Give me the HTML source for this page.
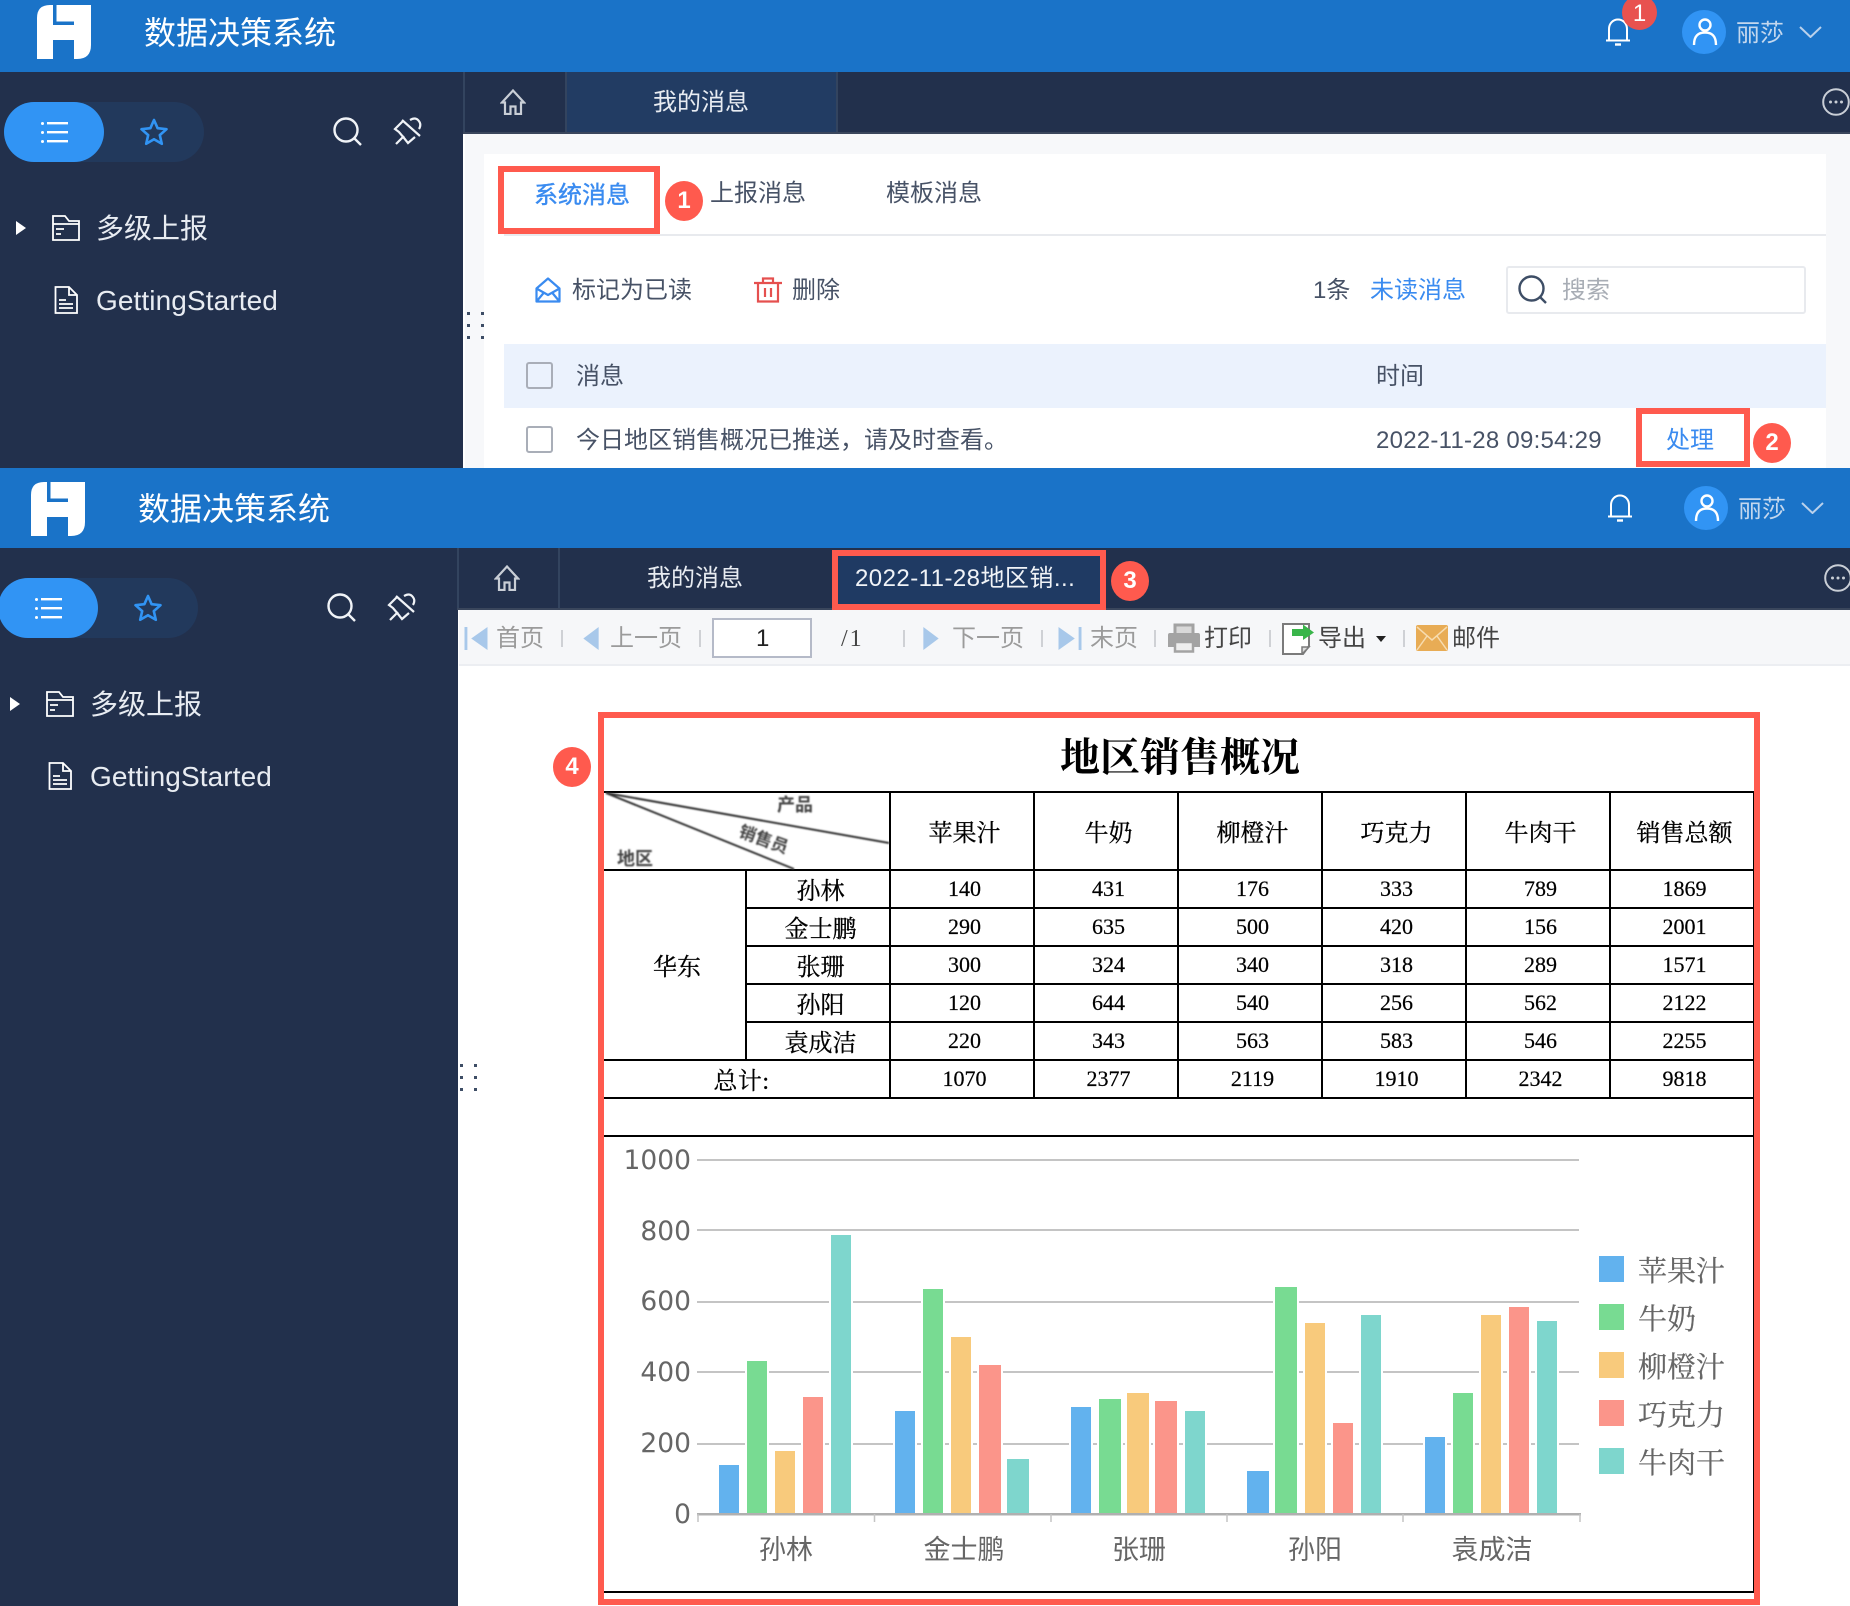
<!DOCTYPE html>
<html lang="zh-CN">
<head>
<meta charset="utf-8">
<title>数据决策系统</title>
<style>
html,body{margin:0;padding:0;background:#fff}
body{width:1850px;height:1606px;overflow:hidden;position:relative;font-family:"Liberation Sans","Noto Sans CJK SC",sans-serif;color:#475266}
.b,.t,svg.i{position:absolute;display:block}
.t{white-space:nowrap;line-height:1;font-size:24px;transform:translate(-1px,1px)}
.w{color:#fff}.bl{color:#3a8bf0}.g{color:#9b9b9b}.d{color:#444}
.red{position:absolute;box-sizing:border-box;border:6px solid #ff5a4e}
.badge{position:absolute;width:38px;height:40px;border-radius:50%;background:#ff5a4e;color:#fff;font-size:24px;font-weight:bold;text-align:center;line-height:40px}
.sep{position:absolute;width:2px;height:17px;top:630px;background:#cfd1d5}
table{position:absolute;left:602px;top:791px;border-collapse:collapse;table-layout:fixed;width:1151px;font-family:"Liberation Serif","Noto Serif CJK SC",serif;color:#000}
td{border:2px solid #000;padding:0 0 0 5px;text-align:center;vertical-align:middle;height:36px;font-size:22px;line-height:1;overflow:hidden;-webkit-text-stroke:.2px #000}
td.c{font-size:24px;padding-top:5px;height:31px;-webkit-text-stroke:.3px #000}
tr.h td{height:76px}
tr.h td.c{height:71px}
</style>
</head>
<body>
<svg width="0" height="0" style="position:absolute">
<defs>
<symbol id="logo" viewBox="0 0 54 54"><path fill="#fff" d="M13 0H16V20H37V35H16V54H0V13Q0 0 13 0ZM19.500 0H54V40Q54 54 40 54H37V16.500H19.500Z"/></symbol>
<symbol id="bell" viewBox="0 0 26 28"><path fill="none" stroke="#fff" stroke-width="2" d="M4 22V11C4 5.500 8 1.500 13 1.500S22 5.500 22 11V22M1 22.500H25"/><path stroke="#fff" stroke-width="2.400" d="M10 26.500H16"/></symbol>
<symbol id="user" viewBox="0 0 44 44"><g fill="none" stroke="#fff" stroke-width="2.400"><circle cx="23" cy="15" r="5.500"/><path d="M12 35C12 26 16 22.500 23 22.500S34 26 34 35"/></g></symbol>
<symbol id="chev" viewBox="0 0 23 12"><path fill="none" stroke="#b9d1ec" stroke-width="2" d="M1 1L11.500 11L22 1"/></symbol>
<symbol id="more" viewBox="0 0 28 28"><circle cx="14" cy="14" r="12.800" fill="none" stroke="#c9ced6" stroke-width="2"/><g fill="#c9ced6"><circle cx="8.500" cy="14" r="1.500"/><circle cx="14" cy="14" r="1.500"/><circle cx="19.500" cy="14" r="1.500"/></g></symbol>
<symbol id="home" viewBox="0 0 26 26"><path fill="none" stroke="#c9ced6" stroke-width="2.200" d="M13 1.500L2 13.500H5V25H10.500V17.500H15.500V25H21V13.500H24Z"/></symbol>
<symbol id="list" viewBox="0 0 28 22"><g fill="#fff"><rect x="0" y="1" width="3" height="3" rx="1.500"/><rect x="0" y="10" width="3" height="3" rx="1.500"/><rect x="0" y="19" width="3" height="3" rx="1.500"/><rect x="6" y="1" width="21" height="2.400"/><rect x="6" y="10" width="21" height="2.400"/><rect x="6" y="19" width="21" height="2.400"/></g></symbol>
<symbol id="star" viewBox="0 0 28 28"><path fill="none" stroke="#3194f4" stroke-width="2.600" stroke-linejoin="round" d="M14 2L17.600 10.200L26.500 11.200L19.800 17.100L21.800 25.800L14 21.200L6.200 25.800L8.200 17.100L1.500 11.200L10.400 10.200Z"/></symbol>
<symbol id="search" viewBox="0 0 30 30"><circle cx="13" cy="13" r="11.500" fill="none" stroke="#f0f3f7" stroke-width="2.400"/><path stroke="#f0f3f7" stroke-width="2.400" d="M21 21L28 28"/></symbol>
<symbol id="pin" viewBox="0 0 32 32"><path fill="none" stroke="#f0f3f7" stroke-width="2.200" d="M10 4L28 20M11 5L3 13L7 16L12 22L16 27L23 21M4 28L12 20M18 4Q23 1 26 4Q30 8 27 13"/></symbol>
<symbol id="folder" viewBox="0 0 28 26"><path fill="none" stroke="#fff" stroke-width="1.800" d="M1 1H13L17 6H27V25H1ZM1 9H27"/><path stroke="#fff" stroke-width="1.800" d="M4 14H12M4 19H9"/></symbol>
<symbol id="file" viewBox="0 0 24 28"><path fill="none" stroke="#fff" stroke-width="1.800" d="M1.500 1H15L23 9V27H1.500ZM15 1V9H23"/><path stroke="#fff" stroke-width="1.800" d="M5 14H12M5 18H19M5 22H19"/></symbol>
<symbol id="mailo" viewBox="0 0 26 26"><path fill="none" stroke="#3a8bf0" stroke-width="2.200" stroke-linejoin="round" d="M13 1.500L1.500 11.500V24.500H24.500V11.500ZM1.500 11.500L13 18L24.500 11.500M1.500 24.500L9 15.500M24.500 24.500L17 15.500"/></symbol>
<symbol id="trash" viewBox="0 0 28 26"><path fill="none" stroke="#e5504f" stroke-width="2.200" d="M0 6H28M9 6V1.500H19V6M4 6V24.500H24V6M11 11V20M17 11V20"/></symbol>
<symbol id="sicon" viewBox="0 0 30 30"><circle cx="13.500" cy="13.500" r="12" fill="none" stroke="#3e4e66" stroke-width="2.400"/><path stroke="#3e4e66" stroke-width="2.400" d="M22 22L28 28"/></symbol>
<symbol id="first" viewBox="0 0 24 24"><path fill="#a8c8ea" d="M0 0H3V24H0ZM24 0V24L7 12Z"/></symbol>
<symbol id="prev" viewBox="0 0 16 24"><path fill="#a8c8ea" d="M16 0V24L0 12Z"/></symbol>
<symbol id="next" viewBox="0 0 16 24"><path fill="#a8c8ea" d="M0 0V24L16 12Z"/></symbol>
<symbol id="last" viewBox="0 0 24 24"><path fill="#a8c8ea" d="M21 0H24V24H21ZM0 0V24L17 12Z"/></symbol>
<symbol id="print" viewBox="0 0 32 30"><path fill="#d8d8d8" stroke="#a3a3a3" stroke-width="3" d="M7 11V2H25V11"/><path fill="#a3a3a3" d="M2 10H30Q32 10 32 12V24H25V19H7V24H0V12Q0 10 2 10Z"/><path fill="#eee" stroke="#a3a3a3" stroke-width="2.500" d="M7 19H25V28.500H7Z"/></symbol>
<symbol id="export" viewBox="0 0 33 32"><path fill="#fff" stroke="#7b7b7b" stroke-width="2" d="M1 1H27V23L21 31H1Z"/><path fill="#dcdcdc" stroke="#7b7b7b" stroke-width="1.500" d="M20 31V24H27Z"/><path fill="#39b54a" d="M10 6H21V1.500L32 9.500L21 17V13H10Z"/></symbol>
<symbol id="mail2" viewBox="0 0 32 26"><rect width="32" height="26" rx="2" fill="#e8ac55"/><path fill="none" stroke="#f7dcb0" stroke-width="1.500" d="M1 2L16 15L31 2M1 25L11 11M31 25L21 11"/></symbol>
<filter id="bl"><feGaussianBlur stdDeviation="0.800"/></filter>
</defs>
</svg>

<!-- FIRST WINDOW -->
<div class="b" style="left:0;top:0;width:1850px;height:72px;background:#1a73c8"></div>
<svg class="i" style="left:37px;top:5px" width="54" height="54"><use href="#logo"/></svg>
<div class="t w" style="left:145px;top:16px;font-size:32px">数据决策系统</div>
<svg class="i" style="left:1605px;top:18px" width="26" height="28"><use href="#bell"/></svg>
<div class="badge" style="left:1622px;top:-5px;width:35px;height:35px;line-height:38px;background:#e8524f;font-weight:normal">1</div>
<div class="b" style="left:1682px;top:10px;width:44px;height:44px;border-radius:50%;background:#3194f4"></div>
<svg class="i" style="left:1682px;top:10px" width="44" height="44"><use href="#user"/></svg>
<div class="t" style="left:1737px;top:21px;color:#c3d7ee">丽莎</div>
<svg class="i" style="left:1799px;top:26px" width="23" height="12"><use href="#chev"/></svg>

<div class="b" style="left:0;top:72px;width:463px;height:396px;background:#22304c"></div>
<div class="b" style="left:4px;top:102px;width:200px;height:60px;border-radius:30px;background:#22395c"></div>
<div class="b" style="left:4px;top:102px;width:100px;height:60px;border-radius:30px;background:#3194f4"></div>
<svg class="i" style="left:41px;top:121px" width="28" height="22"><use href="#list"/></svg>
<svg class="i" style="left:140px;top:118px" width="28" height="28"><use href="#star"/></svg>
<svg class="i" style="left:333px;top:117px" width="30" height="30"><use href="#search"/></svg>
<svg class="i" style="left:392px;top:116px" width="32" height="32"><use href="#pin"/></svg>
<div class="b" style="left:16px;top:221px;border-left:10px solid #fff;border-top:7px solid transparent;border-bottom:7px solid transparent"></div>
<svg class="i" style="left:52px;top:215px" width="28" height="26"><use href="#folder"/></svg>
<div class="t" style="left:97px;top:214px;font-size:28px;color:#e8ecf2">多级上报</div>
<svg class="i" style="left:54px;top:286px" width="24" height="28"><use href="#file"/></svg>
<div class="t" style="left:97px;top:286px;font-size:28px;letter-spacing:.1px;color:#e8ecf2">GettingStarted</div>

<div class="b" style="left:463px;top:72px;width:1387px;height:60px;background:#22304c"></div>
<div class="b" style="left:463px;top:72px;width:2px;height:62px;background:#33445f"></div>
<div class="b" style="left:463px;top:132px;width:1387px;height:2px;background:#3a465c"></div>
<svg class="i" style="left:500px;top:89px" width="26" height="26"><use href="#home"/></svg>
<div class="b" style="left:565px;top:72px;width:273px;height:60px;background:#223c63;border-left:2px solid #33445f;border-right:2px solid #33445f;box-sizing:border-box"></div>
<div class="t" style="left:654px;top:90px;color:#e8ecf2">我的消息</div>
<svg class="i" style="left:1822px;top:88px" width="28" height="28"><use href="#more"/></svg>

<div class="b" style="left:465px;top:134px;width:1385px;height:334px;background:#f7f8fa"></div>
<div class="b" style="left:484px;top:154px;width:1342px;height:314px;background:#fff"></div>
<div class="b" style="left:467px;top:312px;width:3px;height:3px;background:#3e4e66;box-shadow:14px 0 #3e4e66,0 12px #3e4e66,14px 12px #3e4e66,0 24px #3e4e66,14px 24px #3e4e66"></div>

<div class="b" style="left:504px;top:234px;width:1322px;height:2px;background:#e8eaee"></div>
<div class="red" style="left:498px;top:166px;width:162px;height:68px"></div>
<div class="t bl" style="left:535px;top:183px;-webkit-text-stroke:.4px #3a8bf0">系统消息</div>
<div class="badge" style="left:665px;top:181px">1</div>
<div class="t" style="left:711px;top:181px">上报消息</div>
<div class="t" style="left:887px;top:181px">模板消息</div>

<svg class="i" style="left:535px;top:277px" width="26" height="26"><use href="#mailo"/></svg>
<div class="t" style="left:573px;top:278px">标记为已读</div>
<svg class="i" style="left:754px;top:277px" width="28" height="26"><use href="#trash"/></svg>
<div class="t" style="left:793px;top:278px">删除</div>
<div class="t" style="left:1314px;top:278px">1条</div>
<div class="t bl" style="left:1371px;top:278px">未读消息</div>
<div class="b" style="left:1506px;top:266px;width:296px;height:44px;border:2px solid #e8eaee;border-radius:3px"></div>
<svg class="i" style="left:1518px;top:275px" width="30" height="30"><use href="#sicon"/></svg>
<div class="t" style="left:1563px;top:278px;color:#a8adb5">搜索</div>

<div class="b" style="left:504px;top:344px;width:1322px;height:64px;background:#ebf2fd"></div>
<div class="b" style="left:526px;top:362px;width:23px;height:23px;border:2px solid #a9aeb8;border-radius:3px;background:#ebf2fd"></div>
<div class="t" style="left:577px;top:364px">消息</div>
<div class="t" style="left:1377px;top:364px">时间</div>
<div class="b" style="left:526px;top:426px;width:23px;height:23px;border:2px solid #a9aeb8;border-radius:3px"></div>
<div class="t" style="left:577px;top:428px">今日地区销售概况已推送，请及时查看。</div>
<div class="t" style="left:1377px;top:428px;letter-spacing:.25px">2022-11-28 09:54:29</div>
<div class="red" style="left:1636px;top:408px;width:114px;height:59px"></div>
<div class="t bl" style="left:1667px;top:428px">处理</div>
<div class="badge" style="left:1753px;top:423px">2</div>

<!-- SECOND WINDOW -->
<div class="b" style="left:0;top:468px;width:1850px;height:80px;background:#1a73c8"></div>
<svg class="i" style="left:31px;top:482px" width="54" height="54"><use href="#logo"/></svg>
<div class="t w" style="left:139px;top:492px;font-size:32px">数据决策系统</div>
<svg class="i" style="left:1607px;top:494px" width="26" height="28"><use href="#bell"/></svg>
<div class="b" style="left:1684px;top:486px;width:44px;height:44px;border-radius:50%;background:#3194f4"></div>
<svg class="i" style="left:1684px;top:486px" width="44" height="44"><use href="#user"/></svg>
<div class="t" style="left:1739px;top:497px;color:#c3d7ee">丽莎</div>
<svg class="i" style="left:1801px;top:502px" width="23" height="12"><use href="#chev"/></svg>

<div class="b" style="left:0;top:548px;width:458px;height:1058px;background:#22304c"></div>
<div class="b" style="left:-2px;top:578px;width:200px;height:60px;border-radius:30px;background:#22395c"></div>
<div class="b" style="left:-2px;top:578px;width:100px;height:60px;border-radius:30px;background:#3194f4"></div>
<svg class="i" style="left:35px;top:597px" width="28" height="22"><use href="#list"/></svg>
<svg class="i" style="left:134px;top:594px" width="28" height="28"><use href="#star"/></svg>
<svg class="i" style="left:327px;top:593px" width="30" height="30"><use href="#search"/></svg>
<svg class="i" style="left:386px;top:592px" width="32" height="32"><use href="#pin"/></svg>
<div class="b" style="left:10px;top:697px;border-left:10px solid #fff;border-top:7px solid transparent;border-bottom:7px solid transparent"></div>
<svg class="i" style="left:46px;top:691px" width="28" height="26"><use href="#folder"/></svg>
<div class="t" style="left:91px;top:690px;font-size:28px;color:#e8ecf2">多级上报</div>
<svg class="i" style="left:48px;top:762px" width="24" height="28"><use href="#file"/></svg>
<div class="t" style="left:91px;top:762px;font-size:28px;letter-spacing:.1px;color:#e8ecf2">GettingStarted</div>

<div class="b" style="left:458px;top:548px;width:1392px;height:60px;background:#22304c"></div>
<div class="b" style="left:457px;top:548px;width:2px;height:62px;background:#33445f"></div>
<div class="b" style="left:457px;top:608px;width:1393px;height:2px;background:#3a465c"></div>
<svg class="i" style="left:494px;top:565px" width="26" height="26"><use href="#home"/></svg>
<div class="b" style="left:558px;top:548px;width:2px;height:60px;background:#33445f"></div>
<div class="t" style="left:648px;top:566px;color:#e8ecf2">我的消息</div>
<div class="red" style="left:832px;top:550px;width:274px;height:60px;background:#1f3a63"></div>
<div class="t" style="left:856px;top:566px;letter-spacing:.45px;color:#f0f3f7">2022-11-28地区销...</div>
<div class="badge" style="left:1111px;top:561px">3</div>
<svg class="i" style="left:1824px;top:564px" width="28" height="28"><use href="#more"/></svg>

<div class="b" style="left:459px;top:610px;width:1391px;height:996px;background:#fff"></div>
<div class="b" style="left:459px;top:610px;width:1391px;height:54px;background:#f6f7f9;border-bottom:2px solid #eceef2"></div>
<svg class="i" style="left:464px;top:627px" width="24" height="23"><use href="#first"/></svg>
<div class="t g" style="left:497px;top:626px">首页</div>
<div class="sep" style="left:561px"></div>
<svg class="i" style="left:583px;top:627px" width="16" height="23"><use href="#prev"/></svg>
<div class="t g" style="left:611px;top:626px">上一页</div>
<div class="sep" style="left:699px"></div>
<div class="b" style="left:712px;top:618px;width:96px;height:36px;border:2px solid #b5bac8;background:#fff"></div>
<div class="t" style="left:757px;top:626px;color:#222">1</div>
<div class="t" style="left:842px;top:626px;font-family:'Liberation Serif',serif;font-size:24px;letter-spacing:2px;color:#444">/1</div>
<div class="sep" style="left:903px"></div>
<svg class="i" style="left:923px;top:627px" width="16" height="23"><use href="#next"/></svg>
<div class="t g" style="left:953px;top:626px">下一页</div>
<div class="sep" style="left:1041px"></div>
<svg class="i" style="left:1058px;top:627px" width="24" height="23"><use href="#last"/></svg>
<div class="t g" style="left:1091px;top:626px">末页</div>
<div class="sep" style="left:1154px"></div>
<svg class="i" style="left:1168px;top:623px" width="32" height="30"><use href="#print"/></svg>
<div class="t d" style="left:1205px;top:626px">打印</div>
<div class="sep" style="left:1269px"></div>
<svg class="i" style="left:1282px;top:623px" width="33" height="32"><use href="#export"/></svg>
<div class="t d" style="left:1319px;top:626px">导出</div>
<div class="b" style="left:1376px;top:636px;border-top:6px solid #222;border-left:5px solid transparent;border-right:5px solid transparent"></div>
<div class="sep" style="left:1403px"></div>
<svg class="i" style="left:1416px;top:625px" width="32" height="26"><use href="#mail2"/></svg>
<div class="t d" style="left:1453px;top:626px">邮件</div>
<div class="b" style="left:460px;top:1064px;width:3px;height:3px;background:#3e4e66;box-shadow:14px 0 #3e4e66,0 12px #3e4e66,14px 12px #3e4e66,0 24px #3e4e66,14px 24px #3e4e66"></div>

<!-- REPORT -->
<div class="t" style="left:1061px;top:737px;font-family:'Liberation Serif','Noto Serif CJK SC',serif;font-size:40px;font-weight:bold;color:#000">地区销售概况</div>
<table>
<colgroup><col style="width:143px"><col style="width:144px"><col style="width:144px"><col style="width:144px"><col style="width:144px"><col style="width:144px"><col style="width:144px"><col style="width:144px"></colgroup>
<tr class="h"><td colspan="2"></td><td class="c">苹果汁</td><td class="c">牛奶</td><td class="c">柳橙汁</td><td class="c">巧克力</td><td class="c">牛肉干</td><td class="c">销售总额</td></tr>
<tr><td rowspan="5" class="c">华东</td><td class="c">孙林</td><td>140</td><td>431</td><td>176</td><td>333</td><td>789</td><td>1869</td></tr>
<tr><td class="c">金士鹏</td><td>290</td><td>635</td><td>500</td><td>420</td><td>156</td><td>2001</td></tr>
<tr><td class="c">张珊</td><td>300</td><td>324</td><td>340</td><td>318</td><td>289</td><td>1571</td></tr>
<tr><td class="c">孙阳</td><td>120</td><td>644</td><td>540</td><td>256</td><td>562</td><td>2122</td></tr>
<tr><td class="c">袁成洁</td><td>220</td><td>343</td><td>563</td><td>583</td><td>546</td><td>2255</td></tr>
<tr><td colspan="2" class="c" style="padding-right:15px;letter-spacing:.5px">总计:</td><td>1070</td><td>2377</td><td>2119</td><td>1910</td><td>2342</td><td>9818</td></tr>
<tr><td colspan="8"></td></tr>
</table>

<svg class="i" style="left:0;top:0" width="1850" height="1606" font-family="'Liberation Sans','Noto Sans CJK SC',sans-serif">
<!-- diagonal header -->
<g filter="url(#bl)" stroke="#333" stroke-width="2">
<line x1="606" y1="793" x2="889" y2="843"/>
<line x1="606" y1="793" x2="794" y2="869"/>
</g>
<g filter="url(#bl)" fill="#444" font-weight="bold" font-size="18">
<text x="777" y="811">产品</text>
<text x="738" y="845" font-size="17" transform="rotate(20 763 840)">销售员</text>
<text x="617" y="865">地区</text>
</g>
<!-- chart frame -->
<rect x="1753" y="1136" width="2" height="456" fill="#000"/>
<rect x="604" y="1591" width="1151" height="2" fill="#000"/>
<!-- grid -->
<g stroke="#c4c4c4" stroke-width="2">
<line x1="697" x2="1579" y1="1160" y2="1160"/>
<line x1="697" x2="1579" y1="1230" y2="1230"/>
<line x1="697" x2="1579" y1="1302" y2="1302"/>
<line x1="697" x2="1579" y1="1372" y2="1372"/>
<line x1="697" x2="1579" y1="1444" y2="1444"/>
</g>
<g stroke="#fff" stroke-width="4" paint-order="stroke">
<g fill="#62b2ee"><rect x="719" y="1465" width="20" height="49"/><rect x="895" y="1411" width="20" height="103"/><rect x="1071" y="1407" width="20" height="107"/><rect x="1247" y="1471" width="22" height="43"/><rect x="1425" y="1437" width="20" height="77"/></g>
<g fill="#78db92"><rect x="747" y="1361" width="20" height="153"/><rect x="923" y="1289" width="20" height="225"/><rect x="1099" y="1399" width="22" height="115"/><rect x="1275" y="1287" width="22" height="227"/><rect x="1453" y="1393" width="20" height="121"/></g>
<g fill="#f8ca7c"><rect x="775" y="1451" width="20" height="63"/><rect x="951" y="1337" width="20" height="177"/><rect x="1127" y="1393" width="22" height="121"/><rect x="1305" y="1323" width="20" height="191"/><rect x="1481" y="1315" width="20" height="199"/></g>
<g fill="#fb958a"><rect x="803" y="1397" width="20" height="117"/><rect x="979" y="1365" width="22" height="149"/><rect x="1155" y="1401" width="22" height="113"/><rect x="1333" y="1423" width="20" height="91"/><rect x="1509" y="1307" width="20" height="207"/></g>
<g fill="#7ed6cd"><rect x="831" y="1235" width="20" height="279"/><rect x="1007" y="1459" width="22" height="55"/><rect x="1185" y="1411" width="20" height="103"/><rect x="1361" y="1315" width="20" height="199"/><rect x="1537" y="1321" width="20" height="193"/></g>
</g>
<!-- axis -->
<rect x="697" y="1513" width="884" height="2.500" fill="#b0b0b0"/>
<g stroke="#c4c4c4" stroke-width="1.500">
<line x1="698" x2="698" y1="1514" y2="1522"/><line x1="874.500" x2="874.500" y1="1514" y2="1522"/><line x1="1051" x2="1051" y1="1514" y2="1522"/><line x1="1227" x2="1227" y1="1514" y2="1522"/><line x1="1403" x2="1403" y1="1514" y2="1522"/><line x1="1580" x2="1580" y1="1514" y2="1522"/>
</g>
<g fill="#666" font-family="'DejaVu Sans',sans-serif" font-size="26.500" text-anchor="end">
<text x="691" y="1169">1000</text><text x="691" y="1240">800</text><text x="691" y="1310">600</text><text x="691" y="1381">400</text><text x="691" y="1452">200</text><text x="691" y="1523">0</text>
</g>
<g fill="#666" font-size="27" text-anchor="middle">
<text x="786" y="1559">孙林</text><text x="964" y="1559">金士鹏</text><text x="1139" y="1559">张珊</text><text x="1315" y="1559">孙阳</text><text x="1492" y="1559">袁成洁</text>
</g>
<!-- legend -->
<rect x="1599" y="1256" width="25" height="26" fill="#62b2ee"/>
<rect x="1599" y="1304" width="25" height="26" fill="#78db92"/>
<rect x="1599" y="1352" width="25" height="26" fill="#f8ca7c"/>
<rect x="1599" y="1400" width="25" height="26" fill="#fb958a"/>
<rect x="1599" y="1448" width="25" height="26" fill="#7ed6cd"/>
<g fill="#666" font-size="29" font-family="'Liberation Serif','Noto Serif CJK SC',serif" stroke="#666" stroke-width=".2">
<text x="1638" y="1281">苹果汁</text><text x="1638" y="1329">牛奶</text><text x="1638" y="1377">柳橙汁</text><text x="1638" y="1425">巧克力</text><text x="1638" y="1473">牛肉干</text>
</g>
</svg>

<!-- red highlight 4 -->
<div class="red" style="left:598px;top:712px;width:1162px;height:893px"></div>
<div class="badge" style="left:553px;top:747px">4</div>
</body>
</html>
